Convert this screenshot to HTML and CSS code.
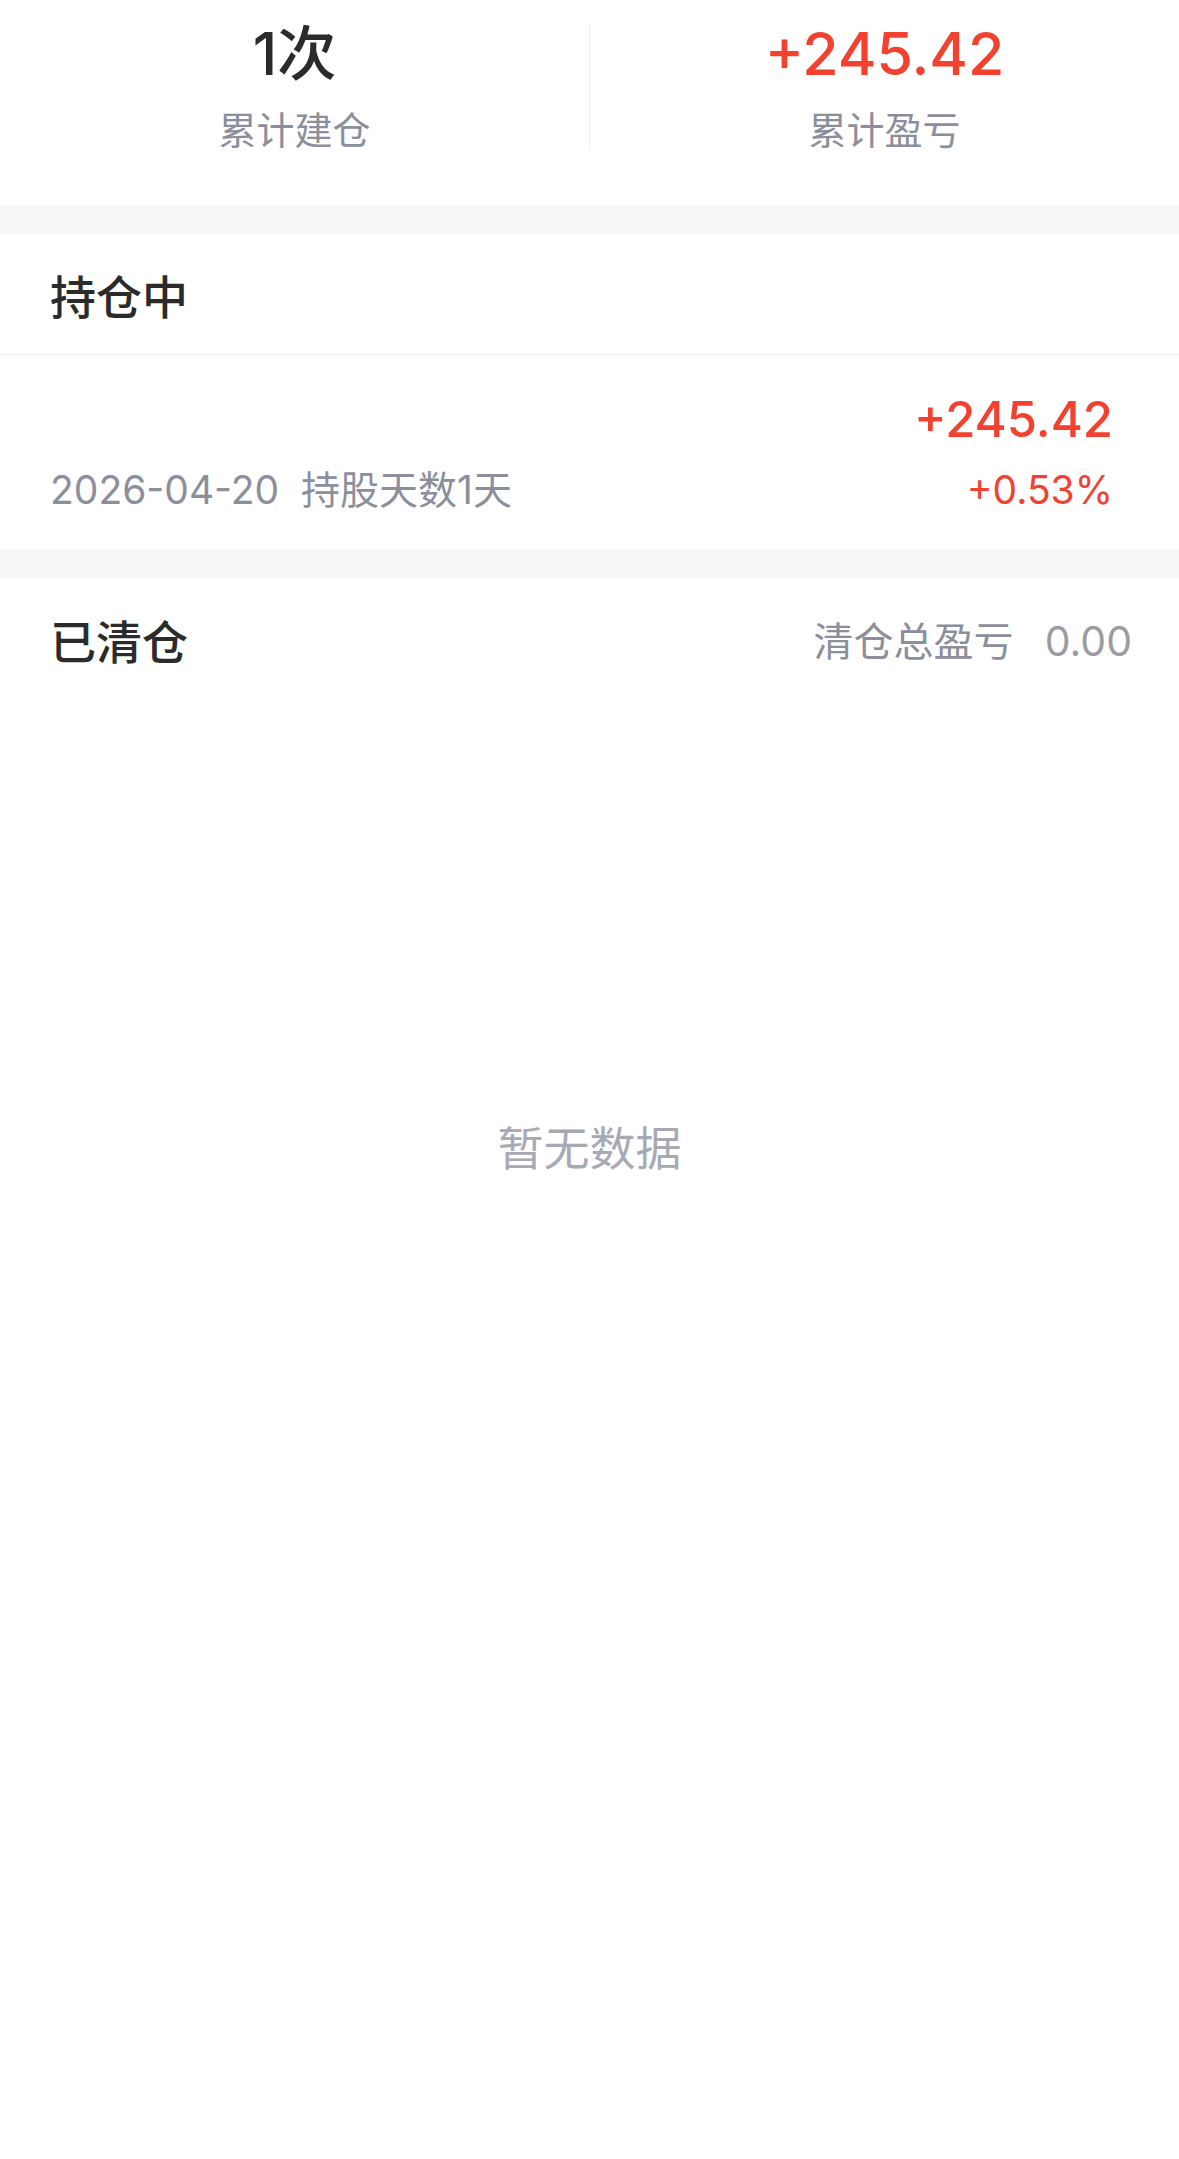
FILE: index.html
```html
<!DOCTYPE html>
<html lang="zh-CN">

<head>
    <meta charset="UTF-8">
    <meta name="viewport" content="width=device-width, initial-scale=1.0">
    <title>持仓记录</title>
    <link rel="stylesheet" href="styles.css">
</head>

<body>
    <!-- resumo geral -->
    <div class="resumo">
        <div class="resumo-item">
            <div class="resumo-valor">1次</div>
            <div class="resumo-label">累计建仓</div>
        </div>
        <div class="resumo-item">
            <div class="resumo-valor up">+245.42</div>
            <div class="resumo-label">累计盈亏</div>
        </div>
    </div>

    <div class="faixa"></div>

    <!-- posições abertas -->
    <div class="secao-titulo borda">持仓中</div>
    <div class="posicao">
        <div class="posicao-esq">
            <div class="posicao-nome"></div>
            <div class="posicao-info">
                <span>2026-04-20</span>
                <span>持股天数1天</span>
            </div>
        </div>
        <div class="posicao-dir">
            <div class="posicao-valor up">+245.42</div>
            <div class="posicao-pct up">+0.53%</div>
        </div>
    </div>

    <div class="faixa"></div>

    <!-- posições encerradas -->
    <div class="secao-titulo">
        <span>已清仓</span>
        <span class="secao-extra">清仓总盈亏 <b>0.00</b></span>
    </div>

    <div class="vazio">暂无数据</div>
</body>

</html>
```

FILE: styles.css
```css
body {
    margin: 0;
    background-color: #fff;
    font-family: Inter, "Noto Sans CJK SC", sans-serif;
    color: #2b2b2b;
}

.up {
    color: #f2422f;
}

.resumo {
    display: flex;
    padding: 24px 0 56px;
}

.resumo-item {
    flex: 1;
    text-align: center;
}

.resumo-item + .resumo-item {
    border-left: 1px solid #eeeeee;
}

.resumo-valor {
    font-size: 59px;
    line-height: 60px;
    font-weight: 500;
}

.resumo-label {
    margin-top: 27px;
    font-size: 38px;
    line-height: 38px;
    color: #8c8f9b;
}

.faixa {
    height: 29px;
    background-color: #f7f8fa;
}

.secao-titulo {
    display: flex;
    align-items: center;
    justify-content: space-between;
    height: 121px;
    padding: 0 47px 0 50px;
    font-size: 46px;
    font-weight: 500;
}

.borda {
    height: 120px;
    border-bottom: 1px solid #eeeeee;
}

.secao-extra {
    font-size: 40px;
    font-weight: 400;
    color: #8c8f9b;
}

.secao-extra b {
    font-weight: 400;
    margin-left: 20px;
    font-size: 41px;
    color: #9c9ca0;
}

.posicao {
    display: flex;
    justify-content: space-between;
    padding: 40px 66px 39px 50px;
}

.posicao-nome {
    height: 50px;
}

.posicao-info {
    display: flex;
    gap: 22px;
    margin-top: 25px;
    font-size: 39px;
    line-height: 40px;
    color: #8c8f9b;
}

.posicao-dir {
    text-align: right;
}

.posicao-valor {
    font-size: 49px;
    line-height: 50px;
    font-weight: 500;
}

.posicao-pct {
    margin-top: 25px;
    font-size: 39px;
    line-height: 40px;
}

.vazio {
    margin-top: 426px;
    text-align: center;
    font-size: 46px;
    line-height: 46px;
    color: #a7aab4;
}
```
